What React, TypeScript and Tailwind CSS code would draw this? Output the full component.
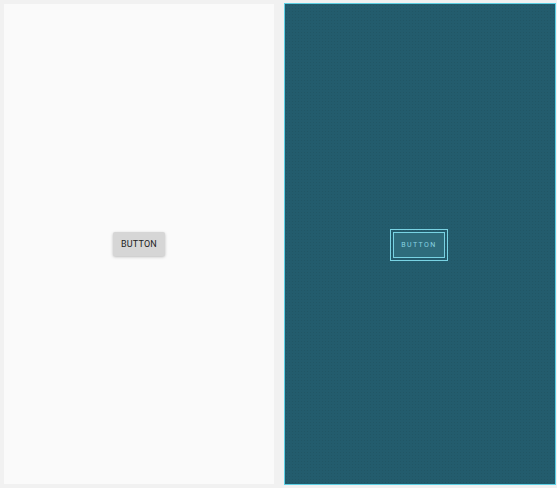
import React from "react";

export default function App() {
  return (
    <div
      className="w-[557px] h-[488px] bg-[#f1f1f1] flex gap-[10px] p-[4px] pr-[1px] pt-[3px] pb-[3px]"
      style={{ fontFamily: "Roboto, 'Liberation Sans', sans-serif" }}
    >
      <div className="w-[270px] h-[480px] mt-[1px] bg-[#fafafa] flex items-center justify-center">
        <div className="w-[52px] h-[24px] pt-[2px] bg-[#d6d6d6] rounded-[2px] shadow-[0_1px_3px_rgba(0,0,0,0.25)] flex items-center justify-center text-[9px] text-[#222] tracking-[0.2px]">
          BUTTON
        </div>
      </div>
      <div
        className="w-[272px] h-[482px] border border-[#5fd0e4] bg-[#235c6d] flex items-center justify-center"
        style={{
          backgroundImage:
            "radial-gradient(rgba(0,0,0,0.07) 0.6px, transparent 0.7px)",
          backgroundSize: "3px 3px",
        }}
      >
        <div className="mt-[2px] -ml-[2px] w-[58px] h-[32px] border border-[#79d3e3] p-[2px] flex">
          <div className="flex-1 pt-[1px] border border-[#79d3e3] bg-[#2e6c7c] flex items-center justify-center text-[7px] text-[#88d3e1] tracking-[1.4px]">
            BUTTON
          </div>
        </div>
      </div>
    </div>
  );
}
